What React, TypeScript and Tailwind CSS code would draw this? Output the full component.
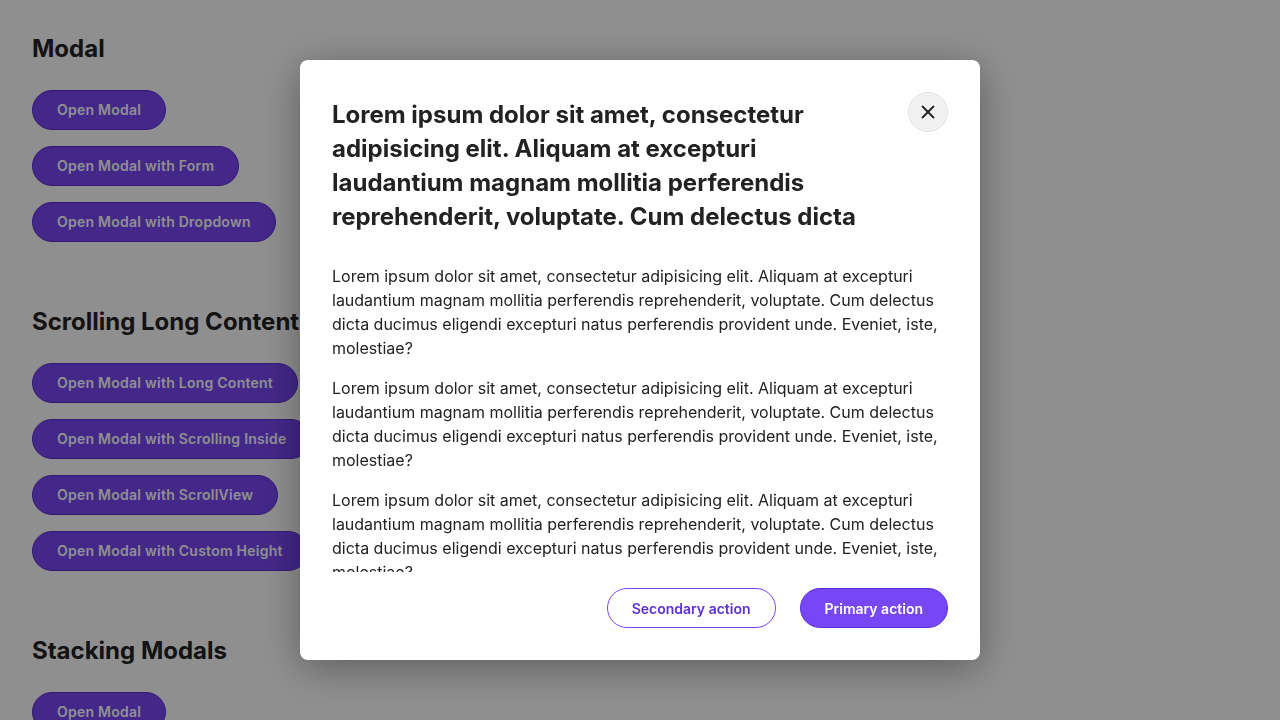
const lorem =
  'Lorem ipsum dolor sit amet, consectetur adipisicing elit. Aliquam at excepturi laudantium magnam mollitia perferendis reprehenderit, voluptate. Cum delectus dicta ducimus eligendi excepturi natus perferendis provident unde. Eveniet, iste, molestiae?'

const sections = [
  { title: 'Modal', buttons: ['Open Modal', 'Open Modal with Form', 'Open Modal with Dropdown'] },
  {
    title: 'Scrolling Long Content',
    buttons: [
      'Open Modal with Long Content',
      'Open Modal with Scrolling Inside',
      'Open Modal with ScrollView',
      'Open Modal with Custom Height',
    ],
  },
  { title: 'Stacking Modals', buttons: ['Open Modal', 'Open Nested Modal'] },
]

function PageButton({ label }: { label: string }) {
  return (
    <button className="h-10 px-6 rounded-full bg-[#7847f5] border border-[#5a2fd0] text-white text-sm font-semibold tracking-[0.25px] whitespace-nowrap">
      {label}
    </button>
  )
}

export default function App() {
  return (
    <div className="relative h-[720px] overflow-hidden bg-white font-['Inter',sans-serif] text-[#222]">
      <div className="px-8 pt-[33px] flex flex-col gap-16">
        {sections.map((s) => (
          <section key={s.title}>
            <h2 className="text-2xl font-bold leading-8 mb-[25px]">{s.title}</h2>
            <div className="flex flex-col items-start gap-4">
              {s.buttons.map((b) => (
                <PageButton key={b} label={b} />
              ))}
            </div>
          </section>
        ))}
      </div>

      <div className="fixed inset-0 bg-black/[0.44] flex items-center justify-center">
        <div className="w-[680px] h-[600px] bg-white rounded-lg shadow-[0_8px_40px_rgba(0,0,0,0.35)] flex flex-col">
          <div className="flex items-start justify-between gap-8 px-8 pt-8 pb-[30px]">
            <h1 className="pt-[6px] text-2xl leading-[34px] font-bold text-[#222]">
              Lorem ipsum dolor sit amet, consectetur adipisicing elit. Aliquam at excepturi laudantium magnam
              mollitia perferendis reprehenderit, voluptate. Cum delectus dicta
            </h1>
            <button className="shrink-0 w-10 h-10 rounded-full bg-[#f1f1f1] border border-[#e2e2e2] flex items-center justify-center">
              <svg width="16" height="16" viewBox="0 0 16 16" fill="none" stroke="#1f1f1f" strokeWidth="1.8" strokeLinecap="round">
                <path d="M2.5 2.5l11 11M13.5 2.5l-11 11" />
              </svg>
            </button>
          </div>
          <div className="flex-1 overflow-hidden px-8 flex flex-col gap-4 text-base leading-6 text-[#222]">
            <p>{lorem}</p>
            <p>{lorem}</p>
            <p>{lorem}</p>
            <p>{lorem}</p>
          </div>
          <div className="flex justify-end gap-6 px-8 pt-4 pb-8">
            <button className="h-10 px-6 rounded-full border border-[#7847f5] bg-white text-[#5b30d6] text-sm font-semibold pt-px">
              Secondary action
            </button>
            <button className="h-10 px-6 rounded-full border border-[#5a2fd0] bg-[#7847f5] text-white text-sm font-semibold pt-px">
              Primary action
            </button>
          </div>
        </div>
      </div>
    </div>
  )
}
